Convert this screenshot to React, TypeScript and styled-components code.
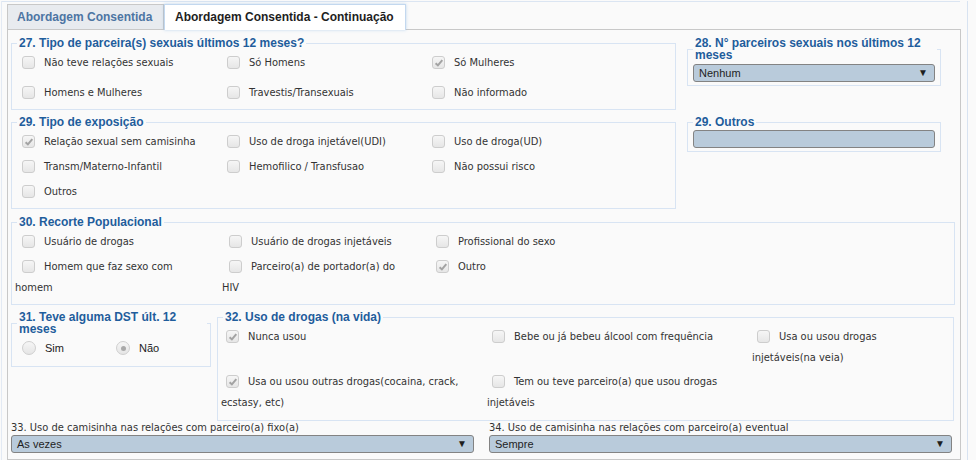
import React from "react";
import styled, { createGlobalStyle } from "styled-components";

const LABEL_FONT = `"DejaVu Sans Condensed", "DejaVu Sans", Verdana, sans-serif`;
const HEAD_FONT = `"Liberation Sans", Arial, sans-serif`;

const Global = createGlobalStyle`
  html, body { margin: 0; padding: 0; background: #fafafa; }
  body { width: 976px; height: 460px; overflow: hidden; }
`;

const Frame = styled.div`
  margin-left: 1px;
  width: 965px;
  height: 460px;
  border-left: 1px solid #e3eaf4;
  border-right: 1px solid #d8e3f1;
`;

const TopRule = styled.div`
  margin: 1px 7px 0 0;
  border-top: 1px solid #dbe5f2;
`;

const Tabs = styled.div`
  margin: 2px 6px 0 5px;
`;

const TabBar = styled.div`
  display: flex;
  align-items: flex-end;
  height: 25px;
`;

const Tab = styled.div<{ $active?: boolean }>`
  box-sizing: border-box;
  height: ${(p) => (p.$active ? 26 : 25)}px;
  margin-bottom: ${(p) => (p.$active ? -1 : 0)}px;
  position: relative;
  z-index: ${(p) => (p.$active ? 1 : 0)};
  width: ${(p) => (p.$active ? 242 : 157)}px;
  padding: 0 ${(p) => (p.$active ? 10 : 9)}px;
  border: 1px solid ${(p) => (p.$active ? "#c3d8ef" : "#c8c8c8")};
  border-bottom: none;
  background: ${(p) => (p.$active ? "#ffffff" : "#e8ebef")};
  box-shadow: ${(p) => (p.$active ? "0 0 3px rgba(120,170,225,0.45)" : "none")};
  color: ${(p) => (p.$active ? "#1e1e1e" : "#4d75a3")};
  font: bold 12px/24px ${HEAD_FONT};
  white-space: nowrap;
`;

const Panel = styled.div`
  box-sizing: border-box;
  height: 431px;
  border: 1px solid #c8c8c8;
  background: #fafafa;
  padding: 7px 5px 0 3px;
`;

const TopGrid = styled.div`
  display: grid;
  grid-template-columns: 665px 254px;
  column-gap: 11px;
  row-gap: 6px;
  align-items: start;
`;

const Box = styled.fieldset<{ $pb?: number; $w?: number }>`
  margin: 0;
  min-width: 0;
  box-sizing: border-box;
  ${(p) => (p.$w ? `width: ${p.$w}px;` : "")}
  padding: 0 3px ${(p) => p.$pb ?? 5}px 3px;
  border: 1px solid #d8e4f3;
`;

const Legend = styled.legend`
  margin-left: 2px;
  padding: 0 2px;
  font: bold 12px/12px ${HEAD_FONT};
  color: #1f5d9c;
`;

const OptGrid = styled.div<{ $cols: string; $gap: number; $rowGap?: number }>`
  display: grid;
  grid-template-columns: ${(p) => p.$cols};
  column-gap: ${(p) => p.$gap}px;
  row-gap: ${(p) => p.$rowGap ?? 0}px;
  align-items: start;
`;

const Opt = styled.div`
  font: 11px/20px ${LABEL_FONT};
  color: #333333;
`;

const CheckBox = styled.span<{ $ml?: number }>`
  display: inline-block;
  vertical-align: -8px;
  box-sizing: border-box;
  width: 13px;
  height: 13px;
  margin: 7px 9px 5px ${(p) => p.$ml ?? 7}px;
  border: 1px solid #cdcdcd;
  border-radius: 3px;
  background: linear-gradient(#f6f6f6, #e6e6e6);
  position: relative;
  svg {
    position: absolute;
    left: 1px;
    top: 1px;
  }
`;

const RadioDot = styled.span<{ $on?: boolean }>`
  display: inline-block;
  vertical-align: -8px;
  box-sizing: border-box;
  width: 14px;
  height: 14px;
  margin: 6px 9px 5px 7px;
  border: 1px solid #cfcfcf;
  border-radius: 50%;
  background: linear-gradient(#f6f6f6, #e5e5e5);
  position: relative;
  &::after {
    content: "";
    display: ${(p) => (p.$on ? "block" : "none")};
    position: absolute;
    left: 3.5px;
    top: 3.5px;
    width: 5px;
    height: 5px;
    border-radius: 50%;
    background: #a9a9a9;
  }
`;

const RadioLabel = styled.div`
  font: 11px/20px ${HEAD_FONT};
  color: #222;
`;

const Select = styled.div<{ $mt?: number; $mb?: number }>`
  display: flex;
  align-items: center;
  justify-content: space-between;
  box-sizing: border-box;
  height: 18px;
  margin: ${(p) => p.$mt ?? 0}px 2px ${(p) => p.$mb ?? 0}px 2px;
  padding: 0 6px 0 5px;
  border: 1px solid #838383;
  border-radius: 3px;
  background: #b9cbdb;
  font: 11px/16px ${HEAD_FONT};
  color: #1e1e1e;
`;

const Arrow = styled.span`
  font-size: 10px;
  line-height: 10px;
  color: #1e1e1e;
`;

const Wide = styled.div`
  margin-top: 7px;
`;

const Row4 = styled.div`
  display: flex;
  gap: 6px;
  align-items: flex-start;
  margin-top: 6px;
`;

const BottomGrid = styled.div`
  display: grid;
  grid-template-columns: 463px 463px;
  column-gap: 15px;
`;

const FieldLabel = styled.div`
  font: 11px/14px ${LABEL_FONT};
  color: #333;
`;

const BottomSelect = styled(Select)`
  margin: 0;
`;

const Check = ({
  on,
  ml,
  children,
}: {
  on?: boolean;
  ml?: number;
  children: React.ReactNode;
}) => (
  <Opt>
    <CheckBox $ml={ml}>
      {on && (
        <svg width="10" height="10" viewBox="0 0 10 10">
          <path d="M1.6 5.2 L3.9 7.4 L8.3 2.2" fill="none" stroke="#a3a3a3" strokeWidth="2" />
        </svg>
      )}
    </CheckBox>
    {children}
  </Opt>
);

export default function App() {
  return (
    <>
      <Global />
      <Frame>
        <TopRule />
        <Tabs>
          <TabBar>
            <Tab>Abordagem Consentida</Tab>
            <Tab $active>Abordagem Consentida - Continuação</Tab>
          </TabBar>
          <Panel>
            <TopGrid>
              <Box>
                <Legend>27. Tipo de parceira(s) sexuais últimos 12 meses?</Legend>
                <OptGrid $cols="190px 190px 190px" $gap={15} $rowGap={5}>
                  <Check>Não teve relações sexuais</Check>
                  <Check>Só Homens</Check>
                  <Check on>Só Mulheres</Check>
                  <Check>Homens e Mulheres</Check>
                  <Check>Travestis/Transexuais</Check>
                  <Check>Não informado</Check>
                </OptGrid>
              </Box>
              <Box $pb={0}>
                <Legend>28. N° parceiros sexuais nos últimos 12 meses</Legend>
                <Select $mt={3} $mb={3}>
                  <span>Nenhum</span>
                  <Arrow>▼</Arrow>
                </Select>
              </Box>
              <Box>
                <Legend>29. Tipo de exposição</Legend>
                <OptGrid $cols="190px 190px 190px" $gap={15}>
                  <Check on>Relação sexual sem camisinha</Check>
                  <Check>Uso de droga injetável(UDI)</Check>
                  <Check>Uso de droga(UD)</Check>
                  <Check>Transm/Materno-Infantil</Check>
                  <Check>Hemofilico / Transfusao</Check>
                  <Check>Não possui risco</Check>
                  <Check>Outros</Check>
                </OptGrid>
              </Box>
              <Box $pb={0}>
                <Legend>29. Outros</Legend>
                <Select $mt={2} $mb={3} />
              </Box>
            </TopGrid>

            <Wide>
              <Box $pb={6}>
                <Legend>30. Recorte Populacional</Legend>
                <OptGrid $cols="190px 190px 190px" $gap={17}>
                  <Check>Usuário de drogas</Check>
                  <Check>Usuário de drogas injetáveis</Check>
                  <Check>Profissional do sexo</Check>
                  <Check>Homem que faz sexo com homem</Check>
                  <Check>Parceiro(a) de portador(a) do HIV</Check>
                  <Check on>Outro</Check>
                </OptGrid>
              </Box>
            </Wide>

            <Row4>
              <Box $w={200} $pb={6}>
                <Legend>31. Teve alguma DST últ. 12 meses</Legend>
                <OptGrid $cols="94px 94px" $gap={0}>
                  <RadioLabel>
                    <RadioDot />
                    Sim
                  </RadioLabel>
                  <RadioLabel>
                    <RadioDot $on />
                    Não
                  </RadioLabel>
                </OptGrid>
              </Box>
              <Box $w={737} $pb={7}>
                <Legend>32. Uso de drogas (na vida)</Legend>
                <OptGrid $cols="246px 245px 175px" $gap={20}>
                  <Check on ml={5}>Nunca usou</Check>
                  <Check ml={5}>Bebe ou já bebeu álcool com frequência</Check>
                  <Check ml={5}>Usa ou usou drogas injetáveis(na veia)</Check>
                  <Check on ml={5}>Usa ou usou outras drogas(cocaina, crack, ecstasy, etc)</Check>
                  <Check ml={5}>Tem ou teve parceiro(a) que usou drogas injetáveis</Check>
                </OptGrid>
              </Box>
            </Row4>

            <BottomGrid>
              <div>
                <FieldLabel>33. Uso de camisinha nas relações com parceiro(a) fixo(a)</FieldLabel>
                <BottomSelect>
                  <span>As vezes</span>
                  <Arrow>▼</Arrow>
                </BottomSelect>
              </div>
              <div>
                <FieldLabel>34. Uso de camisinha nas relações com parceiro(a) eventual</FieldLabel>
                <BottomSelect>
                  <span>Sempre</span>
                  <Arrow>▼</Arrow>
                </BottomSelect>
              </div>
            </BottomGrid>
          </Panel>
        </Tabs>
      </Frame>
    </>
  );
}
